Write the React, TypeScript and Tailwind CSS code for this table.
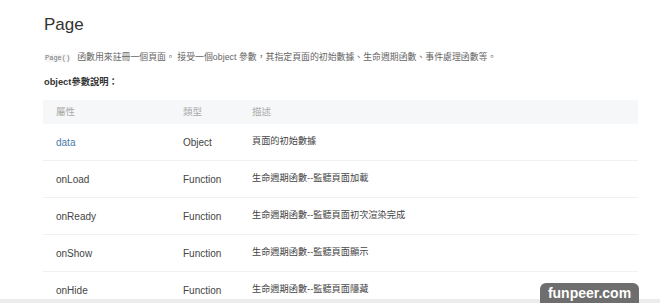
const font = { fontFamily: '"Liberation Sans", "Noto Sans CJK TC", sans-serif' };

interface Row {
  name: string;
  type: string;
  desc: string;
  link?: boolean;
}

const rows: Row[] = [
  { name: 'data', type: 'Object', desc: '頁面的初始數據', link: true },
  { name: 'onLoad', type: 'Function', desc: '生命週期函數--監聽頁面加載' },
  { name: 'onReady', type: 'Function', desc: '生命週期函數--監聽頁面初次渲染完成' },
  { name: 'onShow', type: 'Function', desc: '生命週期函數--監聽頁面顯示' },
  { name: 'onHide', type: 'Function', desc: '生命週期函數--監聽頁面隱藏' },
];

export default function App() {
  return (
    <div
      className="relative h-[303px] w-[660px] overflow-hidden bg-white pl-[43px] pr-[22px] pt-[15px]"
      style={font}
    >
      {/* 標題 */}
      <h1 className="pl-px text-[17px] leading-[20px] text-[#333]">Page</h1>

      <p className="mt-[15px] pl-px text-[8.9px] leading-[14px] text-[#666]">
        <code className="mr-[6px] rounded-sm bg-[#f6f6f6] px-[1px] font-['Liberation_Mono'] text-[7px] text-[#777]">
          Page()
        </code>
        函數用來註冊一個頁面。 接受一個object 參數，其指定頁面的初始數據、生命週期函數、事件處理函數等。
      </p>

      <p className="mt-[10px] pl-px text-[9.3px] font-bold leading-[14px] text-[#333]">
        object參數說明：
      </p>

      {/* 參數表 */}
      <div className="mt-[11px] text-[10px]">
        <div className="flex h-[24px] items-center bg-[#f6f7f8] text-[9.5px] text-[#aaa]">
          <div className="w-[140px] pl-[13px]">屬性</div>
          <div className="w-[69px]">類型</div>
          <div className="flex-1">描述</div>
        </div>
        {rows.map((r) => (
          <div
            key={r.name}
            className="flex h-[37px] items-center border-b border-[#f0f0f0] text-[#444]"
          >
            <div className={`w-[140px] pl-[13px] ${r.link ? 'text-[#4a7aab]' : ''}`}>
              {r.name}
            </div>
            <div className="w-[69px]">{r.type}</div>
            <div className="flex-1 text-[9.2px]">{r.desc}</div>
          </div>
        ))}
      </div>

      {/* 底部邊 */}
      <div className="absolute bottom-0 left-0 h-[4px] w-full bg-[#ececec]" />

      {/* 水印 */}
      <div className="absolute bottom-0 left-[540px] flex h-[20px] w-[99px] items-center justify-center rounded-t-[6px] bg-[#6e6e6e] text-[14px] font-bold text-white">
        funpeer.com
      </div>
    </div>
  );
}
